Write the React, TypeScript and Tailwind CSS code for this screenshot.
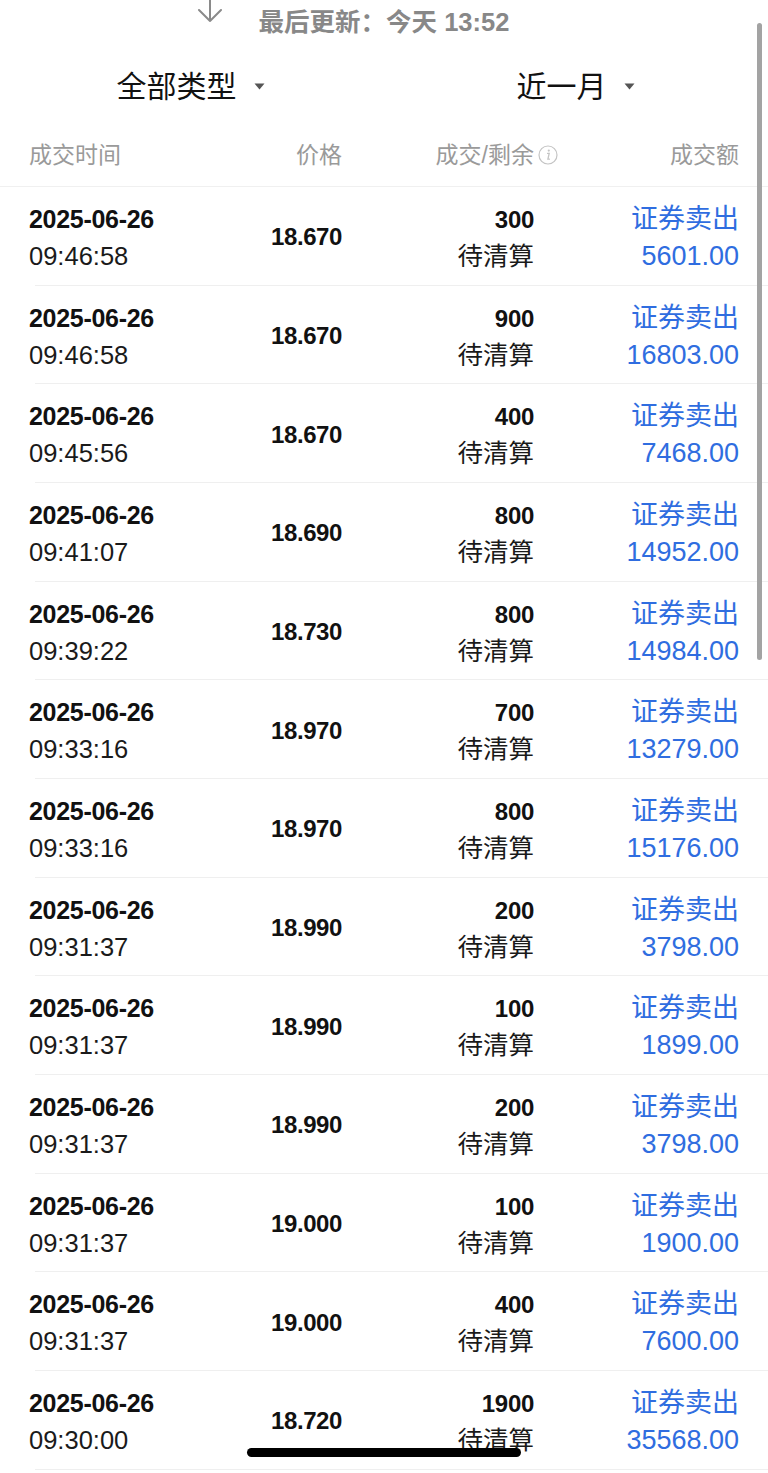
import React from 'react';

interface Trade {
  date: string;
  time: string;
  price: string;
  qty: string;
  amount: string;
}

const trades: Trade[] = [
  { date: '2025-06-26', time: '09:46:58', price: '18.670', qty: '300', amount: '5601.00' },
  { date: '2025-06-26', time: '09:46:58', price: '18.670', qty: '900', amount: '16803.00' },
  { date: '2025-06-26', time: '09:45:56', price: '18.670', qty: '400', amount: '7468.00' },
  { date: '2025-06-26', time: '09:41:07', price: '18.690', qty: '800', amount: '14952.00' },
  { date: '2025-06-26', time: '09:39:22', price: '18.730', qty: '800', amount: '14984.00' },
  { date: '2025-06-26', time: '09:33:16', price: '18.970', qty: '700', amount: '13279.00' },
  { date: '2025-06-26', time: '09:33:16', price: '18.970', qty: '800', amount: '15176.00' },
  { date: '2025-06-26', time: '09:31:37', price: '18.990', qty: '200', amount: '3798.00' },
  { date: '2025-06-26', time: '09:31:37', price: '18.990', qty: '100', amount: '1899.00' },
  { date: '2025-06-26', time: '09:31:37', price: '18.990', qty: '200', amount: '3798.00' },
  { date: '2025-06-26', time: '09:31:37', price: '19.000', qty: '100', amount: '1900.00' },
  { date: '2025-06-26', time: '09:31:37', price: '19.000', qty: '400', amount: '7600.00' },
  { date: '2025-06-26', time: '09:30:00', price: '18.720', qty: '1900', amount: '35568.00' },
];

const FONT = "font-['Liberation_Sans','Noto_Sans_CJK_SC',sans-serif]";
const GRID = 'grid grid-cols-[180px_133px_192px_205px] px-[29px]';

const Caret = () => (
  <svg width="11" height="7" viewBox="0 0 11 7" className="ml-[17px]">
    <path d="M0.5 0.5 L10.5 0.5 L5.5 6.5 Z" fill="#555" />
  </svg>
);

const InfoIcon = () => (
  <svg width="20" height="20" viewBox="0 0 20 20" className="ml-[4px] -mr-[24px]">
    <circle cx="10" cy="10" r="9" fill="none" stroke="#c4c4c4" strokeWidth="1.2" />
    <circle cx="10.8" cy="5.6" r="1.1" fill="#c4c4c4" />
    <path d="M9.6 8.4 L11.2 8.4 L9.9 14.2 L11.4 14.2" fill="none" stroke="#c4c4c4" strokeWidth="1.3" strokeLinecap="round" />
  </svg>
);

const TradeRow: React.FC<{ t: Trade }> = ({ t }) => (
  <div className="relative h-[98.67px]">
    <div className={`${GRID} h-full`}>
      <div className="flex flex-col pt-[14px]">
        <span className="text-[25px] leading-[37px] font-bold tracking-[-0.3px] text-[#111]">{t.date}</span>
        <span className="text-[25.5px] leading-[37px] text-[#1a1a1a]">{t.time}</span>
      </div>
      <div className="flex items-center justify-end pt-[2px]">
        <span className="text-[24px] font-bold tracking-[-0.4px] text-[#111]">{t.price}</span>
      </div>
      <div className="flex flex-col items-end pt-[14px]">
        <span className="text-[24px] leading-[37px] font-bold tracking-[-0.3px] text-[#111]">{t.qty}</span>
        <span className="text-[25.5px] leading-[37px] text-[#1a1a1a]">待清算</span>
      </div>
      <div className="flex flex-col items-end pt-[14px]">
        <span className="text-[27px] leading-[37px] text-[#2f6de0]">证券卖出</span>
        <span className="text-[27px] leading-[37px] text-[#2f6de0]">{t.amount}</span>
      </div>
    </div>
    <div className="absolute bottom-0 left-[35px] right-0 h-px bg-[#efefef]" />
  </div>
);

export default function App() {
  return (
    <div className={`relative w-[768px] h-[1473px] overflow-hidden bg-white ${FONT}`}>
      <div className="flex justify-center pt-[6px] h-[44px]">
        <span className="relative text-[25.5px] leading-[32px] font-semibold text-[#888]">
          <svg
            width="28"
            height="24"
            viewBox="0 0 28 24"
            className="absolute right-full mr-[35px] -top-[6px]"
          >
            <path d="M14 0 L14 21 M3 10 L14 21 L25 10" fill="none" stroke="#8a8a8a" strokeWidth="2" strokeLinecap="round" strokeLinejoin="round" />
          </svg>
          最后更新：今天 13:52
        </span>
      </div>

      <div className="flex h-[86px] items-center pb-[2px]">
        <div className="flex flex-1 items-center justify-center pr-[4px]">
          <span className="text-[30px] text-[#111]">全部类型</span>
          <Caret />
        </div>
        <div className="flex flex-1 items-center justify-center pr-[2px]">
          <span className="text-[30px] text-[#111]">近一月</span>
          <Caret />
        </div>
      </div>

      <div className={`${GRID} h-[57px] items-center pb-[6px] border-b border-[#f0f0f0] text-[23px] text-[#9a9a9a]`}>
        <span>成交时间</span>
        <span className="text-right">价格</span>
        <span className="flex items-center justify-end">
          成交/剩余
          <InfoIcon />
        </span>
        <span className="text-right">成交额</span>
      </div>

      {trades.map((t, i) => (
        <TradeRow key={i} t={t} />
      ))}

      <div className="absolute right-[6px] top-[23px] h-[637px] w-[5px] rounded-full bg-[#a3a3a3]" />
      <div className="absolute left-[247px] top-[1448px] h-[9px] w-[274px] rounded-full bg-black" />
    </div>
  );
}
